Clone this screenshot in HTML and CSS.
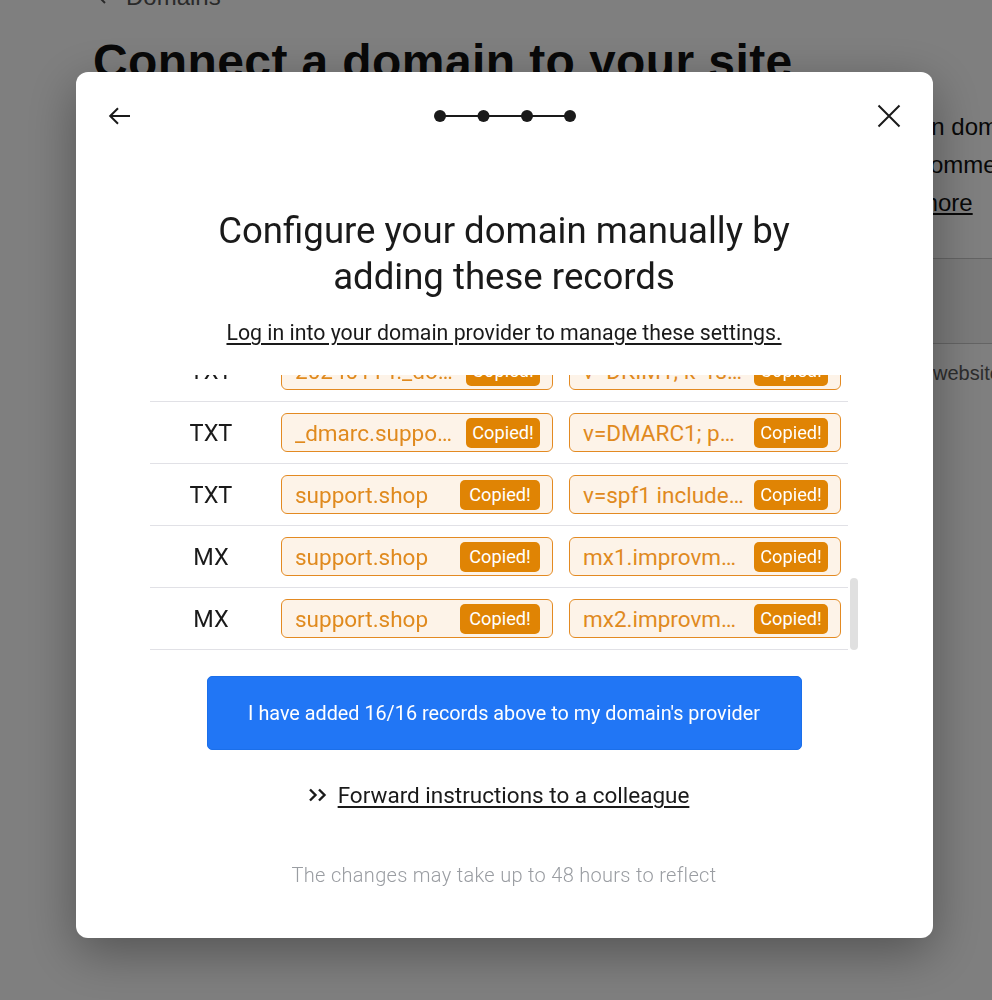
FILE: index.html
```html
<!DOCTYPE html>
<html lang="en">
<head>
<meta charset="utf-8">
<title>Connect a domain</title>
<link rel="stylesheet" href="styles.css">
</head>
<body>
<div class="page">
  <div class="crumb">
    <svg class="crumb-icon" width="10" height="16" viewBox="0 0 10 16"><path d="M8 2 2 8l6 6" fill="none" stroke="currentColor" stroke-width="2"/></svg>
    <span>Domains</span>
  </div>
  <h1 class="page-title">Connect a domain to your site</h1>
  <div class="intro">
    <div class="intro-spacer"></div>
    <div class="intro-text">
      <div class="intro-line">an domain to your site</div>
      <div class="intro-line">commend using</div>
      <div class="intro-line"><span class="intro-link">more</span></div>
    </div>
  </div>
  <div class="page-card"></div>
  <div class="page-below">website</div>
</div>

<div class="overlay"></div>

<div class="modal">
  <div class="modal-header">
    <svg class="icon" width="24" height="24" viewBox="0 0 24 24"><path d="M22 12H2.5M10 4.2 2.2 12l7.8 7.8" fill="none" stroke="#1a1a1a" stroke-width="2"/></svg>
    <svg class="stepper" width="142" height="14" viewBox="0 0 142 14">
      <path d="M6 7H136" stroke="#1a1a1a" stroke-width="2"/>
      <circle cx="6" cy="7" r="6" fill="#1a1a1a"/>
      <circle cx="49.5" cy="7" r="6" fill="#1a1a1a"/>
      <circle cx="93" cy="7" r="6" fill="#1a1a1a"/>
      <circle cx="136" cy="7" r="6" fill="#1a1a1a"/>
    </svg>
    <svg class="icon" width="24" height="24" viewBox="0 0 24 24"><path d="M1.5 1.5 22.5 22.5M22.5 1.5 1.5 22.5" fill="none" stroke="#1a1a1a" stroke-width="2"/></svg>
  </div>

  <h2 class="modal-title">Configure your domain manually by<br>adding these records</h2>
  <p class="modal-sub"><a class="sub-link">Log in into your domain provider to manage these settings.</a></p>

  <div class="records-wrap">
    <div class="records">
      <div class="records-inner">
        <div class="rec-head">
          <span class="rec-type">Type</span>
          <span class="head-cell">Host</span>
          <span class="head-cell">Value</span>
        </div>
        <div class="rec-row"><span class="rec-type">A</span><div class="field"><span class="field-text">@</span><span class="badge">Copied!</span></div><div class="field"><span class="field-text">76.76.21.21</span><span class="badge">Copied!</span></div></div>
        <div class="rec-row"><span class="rec-type">CNAME</span><div class="field"><span class="field-text">www</span><span class="badge">Copied!</span></div><div class="field"><span class="field-text">cname.sitehost.net</span><span class="badge">Copied!</span></div></div>
        <div class="rec-row"><span class="rec-type">TXT</span><div class="field"><span class="field-text">@</span><span class="badge">Copied!</span></div><div class="field"><span class="field-text">site-verification=8f2a91c</span><span class="badge">Copied!</span></div></div>
        <div class="rec-row"><span class="rec-type">CNAME</span><div class="field"><span class="field-text">em1234.support.shop</span><span class="badge">Copied!</span></div><div class="field"><span class="field-text">u1234.wl.sendgrid.net</span><span class="badge">Copied!</span></div></div>
        <div class="rec-row"><span class="rec-type">CNAME</span><div class="field"><span class="field-text">s1._domainkey.support.shop</span><span class="badge">Copied!</span></div><div class="field"><span class="field-text">s1.domainkey.u1234.wl.sendgrid.net</span><span class="badge">Copied!</span></div></div>
        <div class="rec-row"><span class="rec-type">CNAME</span><div class="field"><span class="field-text">s2._domainkey.support.shop</span><span class="badge">Copied!</span></div><div class="field"><span class="field-text">s2.domainkey.u1234.wl.sendgrid.net</span><span class="badge">Copied!</span></div></div>
        <div class="rec-row"><span class="rec-type">MX</span><div class="field"><span class="field-text">send.support.shop</span><span class="badge">Copied!</span></div><div class="field"><span class="field-text">feedback-smtp.amazonses.com</span><span class="badge">Copied!</span></div></div>
        <div class="rec-row"><span class="rec-type">TXT</span><div class="field"><span class="field-text">send.support.shop</span><span class="badge">Copied!</span></div><div class="field"><span class="field-text">v=spf1 include:amazonses.com ~all</span><span class="badge">Copied!</span></div></div>
        <div class="rec-row"><span class="rec-type">TXT</span><div class="field"><span class="field-text">resend._domainkey.support.shop</span><span class="badge">Copied!</span></div><div class="field"><span class="field-text">p=MIGfMA0GCSqGSIb3DQEB</span><span class="badge">Copied!</span></div></div>
        <div class="rec-row"><span class="rec-type">CNAME</span><div class="field"><span class="field-text">pm-bounces.support.shop</span><span class="badge">Copied!</span></div><div class="field"><span class="field-text">pm.mtasv.net</span><span class="badge">Copied!</span></div></div>
        <div class="rec-row"><span class="rec-type">TXT</span><div class="field"><span class="field-text">20240114._domainkey.support.shop</span><span class="badge">Copied!</span></div><div class="field"><span class="field-text">v=DKIM1; k=rsa; p=MIGfMA0G</span><span class="badge">Copied!</span></div></div>
        <div class="rec-row"><span class="rec-type">TXT</span><div class="field"><span class="field-text">_dmarc.support.shop</span><span class="badge">Copied!</span></div><div class="field"><span class="field-text">v=DMARC1; p=none;</span><span class="badge">Copied!</span></div></div>
        <div class="rec-row"><span class="rec-type">TXT</span><div class="field"><span class="field-text">support.shop</span><span class="badge">Copied!</span></div><div class="field"><span class="field-text">v=spf1 include:spf.improvmx.com ~all</span><span class="badge">Copied!</span></div></div>
        <div class="rec-row"><span class="rec-type">MX</span><div class="field"><span class="field-text">support.shop</span><span class="badge">Copied!</span></div><div class="field"><span class="field-text">mx1.improvmx.com</span><span class="badge">Copied!</span></div></div>
        <div class="rec-row"><span class="rec-type">MX</span><div class="field"><span class="field-text">support.shop</span><span class="badge">Copied!</span></div><div class="field"><span class="field-text">mx2.improvmx.com</span><span class="badge">Copied!</span></div></div>
      </div>
    </div>
    <div class="scroll-thumb"></div>
  </div>

  <button class="primary-btn" type="button">I have added 16/16 records above to my domain's provider</button>

  <div class="forward">
    <svg class="forward-icon" width="20" height="14" viewBox="0 0 20 14"><path d="M2 1.5 7.5 7 2 12.5M11 1.5 16.5 7 11 12.5" fill="none" stroke="#1a1a1a" stroke-width="2.4"/></svg>
    <a class="forward-link">Forward instructions to a colleague</a>
  </div>

  <p class="footnote">The changes may take up to 48 hours to reflect</p>
</div>
</body>
</html>
```

FILE: styles.css
```css
* { box-sizing: border-box; }

html, body {
  margin: 0;
  padding: 0;
}

body {
  width: 992px;
  height: 1000px;
  overflow: hidden;
  background: #ffffff;
  font-family: "Liberation Sans", Arial, sans-serif;
  color: #111111;
}

/* ---------- background page ---------- */
.page {
  margin-top: -18px;
  padding-left: 93px;
  width: 992px;
  overflow: hidden;
}

.crumb {
  display: flex;
  align-items: center;
  gap: 19px;
  height: 30px;
  font-size: 24px;
  line-height: 30px;
  color: #555555;
}

.crumb-icon { margin-left: 4px; }

.page-title {
  margin: 22px 0 0;
  font-size: 48px;
  line-height: 56px;
  font-weight: 700;
  letter-spacing: 0.4px;
  white-space: nowrap;
  color: #111111;
}

.intro {
  display: flex;
  margin-top: 18px;
}

.intro-spacer {
  flex: none;
  width: 825px;
}

.intro-text {
  font-size: 24px;
  line-height: 38px;
  white-space: nowrap;
  color: #111111;
}

.intro-link { text-decoration: underline; }

.page-card {
  margin-top: 36px;
  height: 86px;
  border-top: 1px solid #c8c8c8;
  border-bottom: 1px solid #c8c8c8;
  background: #f5f5f5;
}

.page-below {
  margin-top: 15px;
  padding-left: 840px;
  font-size: 20px;
  line-height: 28px;
  white-space: nowrap;
  color: #5a5a5a;
}

.overlay {
  position: fixed;
  inset: 0;
  background: rgba(0, 0, 0, 0.5);
}

/* ---------- modal ---------- */
.modal {
  position: fixed;
  left: 76px;
  top: 72px;
  width: 857px;
  padding: 0 75px 50px 74px;
  background: #ffffff;
  border-radius: 12px;
  box-shadow: 0 14px 50px rgba(0, 0, 0, 0.35);
  font-family: Roboto, "Liberation Sans", sans-serif;
  color: #1a1a1a;
}

.modal-header {
  display: flex;
  align-items: center;
  justify-content: space-between;
  height: 88px;
  margin: 0 -43px 0 -42px;
}

.icon { display: block; }
.stepper { display: block; }

.modal-title {
  margin: 48px 0 0;
  font-size: 36.6px;
  line-height: 46px;
  font-weight: 400;
  text-align: center;
  color: #1a1a1a;
}

.modal-sub {
  margin: 19px 0 0;
  font-size: 21.3px;
  line-height: 28px;
  text-align: center;
}

.sub-link {
  color: #1a1a1a;
  text-decoration: underline;
  text-underline-offset: 3px;
}

/* ---------- records table ---------- */
.records-wrap {
  position: relative;
  margin-top: 28px;
}

.records {
  width: 698px;
  height: 275px;
  overflow-y: auto;
  scrollbar-width: none;
  display: flex;
  flex-direction: column-reverse;
}

.records::-webkit-scrollbar { display: none; }

.scroll-thumb {
  position: absolute;
  right: 0;
  bottom: 0;
  width: 8px;
  height: 72px;
  border-radius: 4px;
  background: #e0e0e0;
}

.records-inner { flex: none; }

.rec-head {
  display: flex;
  align-items: flex-end;
  height: 124px;
  padding-bottom: 20px;
  border-bottom: 1px solid #e1e1e6;
  font-size: 16px;
  color: #6b6e73;
}

.head-cell {
  width: 272px;
  padding-left: 14px;
}
.head-cell + .head-cell { margin-left: 16px; }

.rec-row {
  display: flex;
  align-items: center;
  height: 62px;
  border-bottom: 1px solid #e1e1e6;
}

.rec-type {
  flex: none;
  width: 122px;
  margin-right: 9px;
  text-align: center;
  font-size: 23.5px;
  color: #1a1a1a;
}
.rec-head .rec-type { font-size: 16px; color: #6b6e73; }

.field {
  flex: none;
  display: flex;
  align-items: center;
  gap: 9px;
  width: 272px;
  height: 39px;
  padding: 0 12px 0 13px;
  border: 1.5px solid #e38a22;
  border-radius: 6px;
  background: #fdf3e8;
}
.field + .field { margin-left: 16px; }

.field-text {
  flex: 0 1 auto;
  min-width: 0;
  overflow: hidden;
  white-space: nowrap;
  text-overflow: ellipsis;
  font-size: 22.5px;
  color: #e08a1e;
}

.badge {
  flex: 0 1 80px;
  min-width: 74px;
  margin-left: auto;
  height: 30px;
  display: flex;
  align-items: center;
  justify-content: center;
  border-radius: 5px;
  background: #e08404;
  color: #ffffff;
  font-size: 18.2px;
  white-space: nowrap;
}

/* ---------- actions ---------- */
.primary-btn {
  display: block;
  width: 595px;
  height: 74px;
  margin: 26px auto 0;
  border: 1px solid #1b6fea;
  border-radius: 5px;
  background: #2176f5;
  color: #ffffff;
  font-family: Roboto, "Liberation Sans", sans-serif;
  font-size: 19.8px;
}

.forward {
  display: flex;
  align-items: center;
  justify-content: center;
  gap: 10px;
  margin-top: 31px;
  padding-right: 11px;
  height: 28px;
}

.forward-icon { display: block; }

.forward-link {
  font-size: 22.5px;
  line-height: 28px;
  color: #1a1a1a;
  text-decoration: underline;
  text-underline-offset: 3px;
}

.footnote {
  margin: 53px 0 0;
  font-size: 20px;
  line-height: 26px;
  font-weight: 300;
  letter-spacing: 0.3px;
  text-align: center;
  color: #9a9da2;
}
```
